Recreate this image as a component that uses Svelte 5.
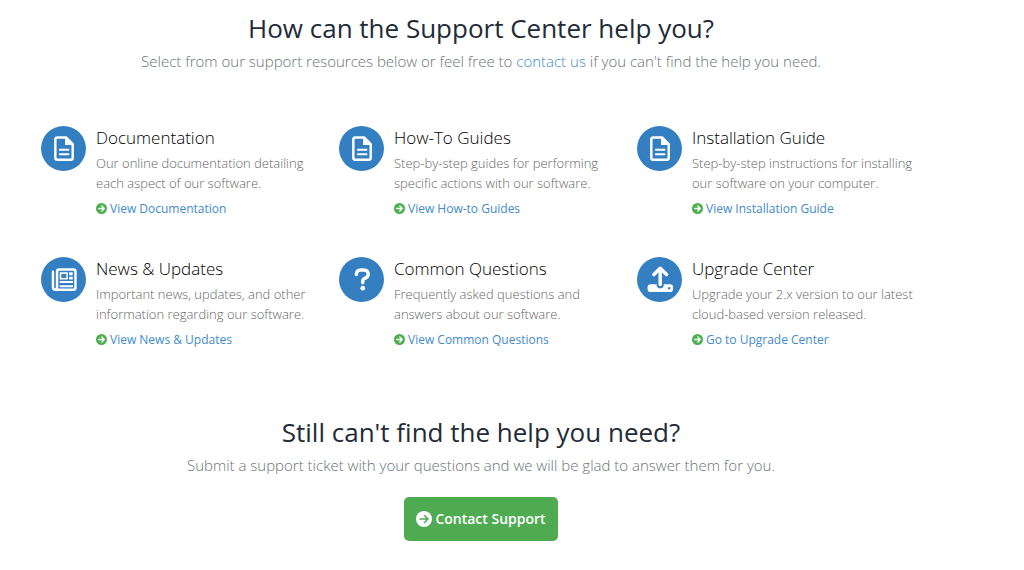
<script lang="ts">
	type Topic = {
		icon: 'file' | 'news' | 'question' | 'upload';
		title: string;
		text: string;
		link: string;
	};

	const topics: Topic[] = [
		{
			icon: 'file',
			title: 'Documentation',
			text: 'Our online documentation detailing each aspect of our software.',
			link: 'View Documentation'
		},
		{
			icon: 'file',
			title: 'How-To Guides',
			text: 'Step-by-step guides for performing specific actions with our software.',
			link: 'View How-to Guides'
		},
		{
			icon: 'file',
			title: 'Installation Guide',
			text: 'Step-by-step instructions for installing our software on your computer.',
			link: 'View Installation Guide'
		},
		{
			icon: 'news',
			title: 'News & Updates',
			text: 'Important news, updates, and other information regarding our software.',
			link: 'View News & Updates'
		},
		{
			icon: 'question',
			title: 'Common Questions',
			text: 'Frequently asked questions and answers about our software.',
			link: 'View Common Questions'
		},
		{
			icon: 'upload',
			title: 'Upgrade Center',
			text: 'Upgrade your 2.x version to our latest cloud-based version released.',
			link: 'Go to Upgrade Center'
		}
	];
</script>

{#snippet arrow()}
	<svg class="arrow" viewBox="0 0 16 16" aria-hidden="true">
		<circle cx="8" cy="8" r="8" fill="currentColor" />
		<path class="arrow-line" d="M4 8h8M8.5 4.5 12 8l-3.500 3.500" />
	</svg>
{/snippet}

<main class="support">
	<header class="intro">
		<h1>How can the Support Center help you?</h1>
		<p>
			Select from our support resources below or feel free to <a href="#contact">contact us</a> if you
			can't find the help you need.
		</p>
	</header>

	<section class="topics">
		{#each topics as topic}
			<article class="topic">
				<svg class="badge" viewBox="0 0 44 44" aria-hidden="true">
					<circle cx="22" cy="22" r="22" fill="#337fc1" />
					{#if topic.icon === 'file'}
						<path
							class="line"
							d="M16 11.2h8.500l6.500 6.500v13.300a2 2 0 0 1-2 2H16a2 2 0 0 1-2-2V13.200a2 2 0 0 1 2-2z"
						/>
						<path class="solid" d="M23.500 11v7.500H31z" />
						<path class="line mid" d="M18.500 23.200h8.300M18.500 27.700h8.300" />
					{:else if topic.icon === 'news'}
						<path class="line" d="M11.700 14.500v15a2.500 2.500 0 0 0 2.500 2.500" />
						<path
							class="line"
							d="M17.700 12.200h14a2 2 0 0 1 2 2V30a2 2 0 0 1-2 2H13.700a2 2 0 0 0 2-2V14.200a2 2 0 0 1 2-2z"
						/>
						<path class="solid" d="M18.300 15h8v7h-8zM27.500 15H31v2.800h-3.500zM27.500 19.200H31V22h-3.500z" />
						<path fill="#337fc1" d="M19.800 16.500h5v4h-5z" />
						<path class="line mid" d="M19 24.500h11.500M19 28.500h11.500" />
					{:else if topic.icon === 'question'}
						<path
							class="line heavy"
							d="M17 17v-.3c0-2.300 1.800-4.100 4.100-4.100h3.300c2.300 0 4.200 1.800 4.200 4.100 0 1.600-.8 2.800-2.200 3.600l-1.800 1c-.9.500-1.400 1.200-1.400 2.200v1.700"
						/>
						<circle class="solid" cx="23.200" cy="30.500" r="2.300" />
					{:else}
						<path
							class="solid"
							d="M13.300 26.700h5.900v.5a3.500 3.500 0 0 0 7 0v-.5h6.100a3 3 0 0 1 3 3v1.600a3 3 0 0 1-3 3h-19a3 3 0 0 1-3-3v-1.600a3 3 0 0 1 3-3z"
						/>
						<path class="line heavy" d="M22.700 27V12M16.500 17.200l6.200-6.200 6.200 6.200" />
						<circle cx="31.500" cy="30.500" r="1.200" fill="#337fc1" />
					{/if}
				</svg>
				<div class="body">
					<h2>{topic.title}</h2>
					<p>{topic.text}</p>
					<a class="more" href="#topic">{@render arrow()}{topic.link}</a>
				</div>
			</article>
		{/each}
	</section>

	<section class="ticket">
		<h1>Still can't find the help you need?</h1>
		<p>Submit a support ticket with your questions and we will be glad to answer them for you.</p>
		<a class="button" href="#contact">{@render arrow()}Contact Support</a>
	</section>
</main>

<style>
	:global(body) {
		background: #fff;
	}

	.support {
		padding: 8px 62px 28px 0;
		font-family: 'Open Sans', sans-serif;
		font-weight: 300;
		color: #6a7475;
	}

	h1,
	h2,
	p {
		margin: 0;
	}

	a {
		color: #428bca;
		text-decoration: none;
	}

	.intro,
	.ticket {
		text-align: center;
	}

	h1 {
		font-size: 26px;
		line-height: 40px;
		font-weight: 400;
		color: #222b37;
	}
	.intro p,
	.ticket p {
		font-size: 15px;
		line-height: 26px;
	}

	.topics {
		display: grid;
		grid-template-columns: repeat(3, 1fr);
		column-gap: 14px;
		row-gap: 40px;
		padding: 52px 41px 0;
	}
	.topic {
		display: flex;
		align-items: flex-start;
		gap: 10px;
	}
	.badge {
		flex: none;
		width: 45px;
		height: 45px;
	}
	.body {
		min-width: 0;
	}
	.body h2 {
		font-size: 17px;
		line-height: 24px;
		font-weight: 300;
		color: #000;
	}
	.body p {
		margin-top: 3px;
		font-size: 13px;
		line-height: 20px;
		color: #666;
	}
	.more {
		display: flex;
		align-items: center;
		gap: 3px;
		margin-top: 7px;
		font-size: 12px;
		line-height: 17px;
		font-weight: 400;
	}

	.arrow {
		flex: none;
		width: 11px;
		height: 11px;
		color: #4caf50;
	}
	.arrow-line {
		fill: none;
		stroke: #fff;
		stroke-width: 2;
		stroke-linecap: round;
		stroke-linejoin: round;
	}

	.line {
		fill: none;
		stroke: #fff;
		stroke-width: 2.400;
		stroke-linecap: round;
		stroke-linejoin: round;
	}
	.mid {
		stroke-width: 2;
	}
	.heavy {
		stroke-width: 3.400;
	}
	.solid {
		fill: #fff;
	}

	.ticket {
		padding-top: 64px;
	}
	.button {
		display: inline-flex;
		align-items: center;
		gap: 3px;
		margin-top: 19px;
		padding: 11px 12px;
		border-radius: 5px;
		background: #4fab51;
		color: #fff;
		font-size: 14px;
		line-height: 22px;
		font-weight: 600;
	}
	.button .arrow {
		width: 16px;
		height: 16px;
		color: #fff;
	}
	.button .arrow-line {
		stroke: #4fab51;
		stroke-width: 1.500;
	}
</style>
